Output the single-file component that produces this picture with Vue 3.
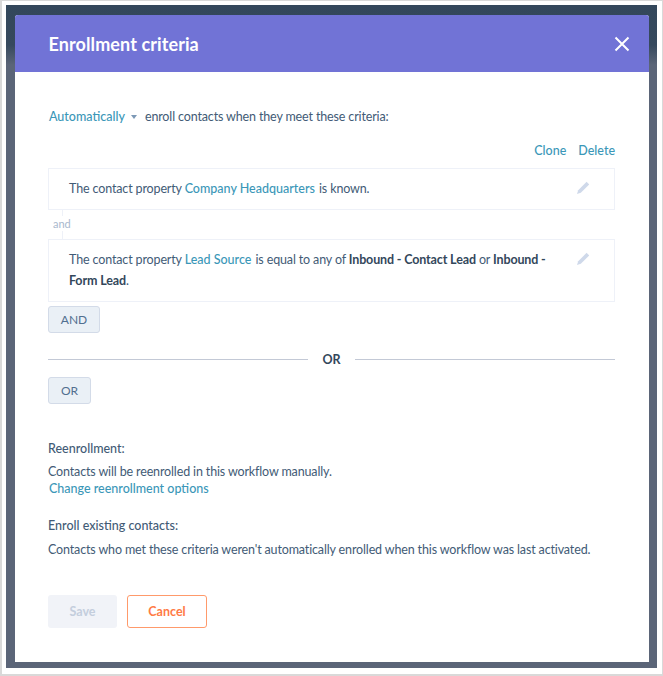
<script setup>
const pencil = 'M10.6 .8 13.2 3.4 4.8 11.8 1 13 2.2 9.2Z';
</script>

<template>
  <div class="page">
    <div class="frame">
      <section class="modal">
        <header class="head">
          <h1>Enrollment criteria</h1>
          <svg class="close" width="16" height="16" viewBox="0 0 16 16" aria-label="Close">
            <path d="M1.5 1.5 14.5 14.5M14.5 1.5 1.5 14.5" stroke="#fff" stroke-width="2" fill="none" />
          </svg>
        </header>
        <div class="body">
          <p class="intro">
            <a class="link auto">Automatically</a>
            <span class="caret"></span>
            <span>enroll contacts when they meet these criteria:</span>
          </p>
          <div class="actions"><a class="link">Clone</a><a class="link">Delete</a></div>

          <div class="rule one">
            <p>The contact property <a class="link">Company Headquarters</a> is known.</p>
            <svg class="pencil" width="14" height="14" viewBox="0 0 14 14"><path :d="pencil" fill="#cfd9ea" /></svg>
          </div>
          <div class="joiner"><span>and</span></div>
          <div class="rule two">
            <p>The contact property <a class="link">Lead Source</a> is equal to any of <b>Inbound - Contact Lead</b> or <b>Inbound - Form Lead</b>.</p>
            <svg class="pencil" width="14" height="14" viewBox="0 0 14 14"><path :d="pencil" fill="#cfd9ea" /></svg>
          </div>
          <button class="ghost and">AND</button>

          <div class="divider"><i></i><b>OR</b><i></i></div>
          <button class="ghost or">OR</button>

          <h2 class="re">Reenrollment:</h2>
          <p class="manual">Contacts will be reenrolled in this workflow manually.</p>
          <a class="link change">Change reenrollment options</a>

          <h2 class="ex">Enroll existing contacts:</h2>
          <p class="met">Contacts who met these criteria weren't automatically enrolled when this workflow was last activated.</p>

          <div class="foot">
            <button class="save">Save</button>
            <button class="cancel">Cancel</button>
          </div>
        </div>
      </section>
    </div>
  </div>
</template>

<style>
html, body { margin: 0; background: #fff; }
</style>

<style scoped>
.page {
  width: 663px;
  height: 676px;
  box-sizing: border-box;
  padding: 0 1px 1px 0;
  background: #fff;
  border: solid #d9d9d9;
  border-width: 1px 1px 2px 2px;
  overflow: hidden;
  font-family: Lato, "Open Sans", sans-serif;
  font-size: 12.5px;
  letter-spacing: -.14px;
  color: #425b76;
}
.frame {
  height: 663px;
  box-sizing: border-box;
  margin: 4px 4px 0 4px;
  padding: 10px 8px 6px 8.5px;
  background: linear-gradient(#33475b 0, #36495d 40px, #5b6578 60px, #5b6578 100%);
}
.modal {
  height: 647px;
  background: #fff;
  border-radius: 3px 3px 0 0;
  overflow: hidden;
}
.head {
  height: 57px;
  background: #7173d6;
  display: flex;
  align-items: center;
  justify-content: space-between;
  padding: 0 19px 0 34px;
}
h1 { margin: 0; font-size: 18px; font-weight: 700; color: #fff; letter-spacing: .1px; }
.body { padding: 0 34px 0 33.5px; }
.intro {
  margin: 36px 0 0 1px;
  height: 18px;
  line-height: 18px;
  display: flex;
  align-items: center;
}
.link { color: #3b97b8; font-size: 12.5px; font-weight: 500; letter-spacing: 0; }
.auto { margin-right: 6px; }
.caret {
  width: 0; height: 0;
  margin-right: 8px;
  border-left: 3.5px solid transparent;
  border-right: 3.5px solid transparent;
  border-top: 4px solid #7c98b6;
}
.actions {
  display: flex;
  justify-content: flex-end;
  gap: 12px;
  margin-top: 16px;
  height: 18px;
  line-height: 18px;
}
.rule {
  box-sizing: border-box;
  border: 1px solid #eef1f8;
  padding: 0 20px;
  display: flex;
  justify-content: space-between;
  align-items: flex-start;
  gap: 16px;
  line-height: 21px;
}
.rule p { margin: 0; }
.rule .link { margin-right: 1px; }
.rule b { font-weight: 700; color: #33475b; }
.one { margin-top: 8px; height: 42px; padding-top: 9px; }
.two { height: 63px; padding-top: 9px; }
.pencil { flex: none; margin: 3px 4px 0 0; }
.joiner {
  height: 29px;
  margin-left: 14px;
  border-left: 1px solid #eef1f8;
  position: relative;
}
.joiner span {
  position: absolute;
  left: -10px;
  top: 6px;
  padding: 1px 0;
  background: #fff;
  line-height: 13px;
  font-size: 11px;
  letter-spacing: 0;
  color: #a9b8cd;
}
.ghost {
  display: block;
  box-sizing: border-box;
  height: 27px;
  padding: 0;
  background: #eaf0f6;
  border: 1px solid #d3dbe8;
  border-radius: 3px;
  font: inherit;
  font-size: 12px;
  letter-spacing: 0;
  color: #516f90;
}
.and { width: 52px; margin-top: 4px; }
.or { width: 43px; margin-top: 4px; }
.divider {
  display: flex;
  align-items: center;
  gap: 14px;
  margin-top: 12px;
  height: 28px;
  font-size: 12.5px;
  letter-spacing: 0;
}
.divider b { font-weight: 700; color: #33475b; }
.divider i { flex: 1; height: 1px; background: #c3c9d6; }
h2 { margin: 0; font-size: 12.5px; font-weight: 500; line-height: 18px; letter-spacing: 0; }
.re { margin-top: 36px; }
.manual { margin: 5px 0 0; line-height: 17px; }
.change { display: block; margin-left: 1px; line-height: 18px; }
.ex { margin-top: 19px; }
.met { margin: 6px 0 0; line-height: 18px; }
.foot { display: flex; gap: 10px; margin-top: 36px; }
.foot button {
  box-sizing: border-box;
  height: 33px;
  padding: 0;
  border-radius: 3px;
  font: inherit;
  font-size: 12.5px;
  font-weight: 700;
  letter-spacing: 0;
}
.save { width: 69px; background: #f1f3f8; border: 0; color: #c4cedd; }
.cancel { width: 80px; background: #fff; border: 1px solid #ff9a6b; color: #ff7a45; }
</style>
